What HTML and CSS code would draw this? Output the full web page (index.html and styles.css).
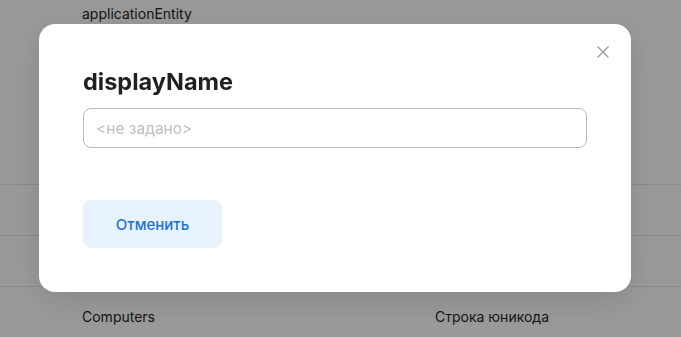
FILE: index.html
```html
<!DOCTYPE html>
<html lang="ru">

<head>
    <meta charset="UTF-8">
    <meta name="viewport" content="width=device-width, initial-scale=1.0">
    <title>displayName</title>
    <link rel="stylesheet" href="styles.css">
</head>

<body>
    <div class="attrs">
        <div class="attr-row attr-row-first">
            <span class="attr-name">applicationEntity</span>
            <span class="attr-type"></span>
        </div>
        <div class="attr-row"><span class="attr-name"></span><span class="attr-type"></span></div>
        <div class="attr-row"><span class="attr-name"></span><span class="attr-type"></span></div>
        <div class="attr-row">
            <span class="attr-name">Computers</span>
            <span class="attr-type">Строка юникода</span>
        </div>
    </div>

    <div class="overlay">
        <div class="modal">
            <button type="button" class="modal-close" aria-label="Закрыть">
                <svg width="12" height="12" viewBox="0 0 12 12">
                    <path d="M0.5 0.5L11.5 11.5M11.5 0.5L0.5 11.5" stroke="#9a9a9e" stroke-width="1.3" fill="none" />
                </svg>
            </button>
            <h2 class="modal-title">displayName</h2>
            <input type="text" class="modal-input" placeholder="<не задано>">
            <div class="modal-actions">
                <button type="button" class="btn-cancel">Отменить</button>
            </div>
        </div>
    </div>
</body>

</html>
```

FILE: styles.css
```css
body {
    margin: 0;
    font-family: Inter, "Noto Sans", sans-serif;
    color: #1f1f24;
    background: #fff;
}

.attr-row {
    display: flex;
    height: 51px;
    padding: 20px 0 0 82px;
    box-sizing: border-box;
    border-bottom: 1px solid #e6e6e8;
    font-size: 14px;
    line-height: 20px;
}

.attr-row-first {
    height: 185px;
    padding-top: 4px;
}

.attr-name {
    width: 353px;
}

.overlay {
    position: fixed;
    inset: 0;
    background: rgba(0, 0, 0, 0.4);
}

.modal {
    position: absolute;
    left: 39px;
    top: 24px;
    width: 592px;
    height: 268px;
    box-sizing: border-box;
    padding: 43px 44px 0 44px;
    background: #fff;
    border-radius: 16px;
    box-shadow: 0 8px 32px rgba(0, 0, 0, 0.12);
}

.modal-close {
    position: absolute;
    top: 16px;
    right: 16px;
    width: 24px;
    height: 24px;
    padding: 0;
    border: none;
    background: none;
    display: flex;
    align-items: center;
    justify-content: center;
}

.modal-title {
    margin: 0 0 11px;
    font-size: 23.5px;
    line-height: 30px;
    font-weight: 700;
    color: #1f2024;
}

.modal-input {
    display: block;
    width: 100%;
    height: 40px;
    box-sizing: border-box;
    padding: 0 12px;
    border: 1px solid #b9b9bf;
    border-radius: 8px;
    font-family: inherit;
    font-size: 15.5px;
    color: #1f2024;
    outline: none;
}

.modal-input::placeholder {
    color: #bdbdc2;
}

.modal-actions {
    margin-top: 52px;
}

.btn-cancel {
    width: 139px;
    height: 48px;
    border: none;
    border-radius: 8px;
    background: #e6f3ff;
    color: #1a6fe0;
    font-family: inherit;
    font-size: 15px;
    font-weight: 500;
}
```
